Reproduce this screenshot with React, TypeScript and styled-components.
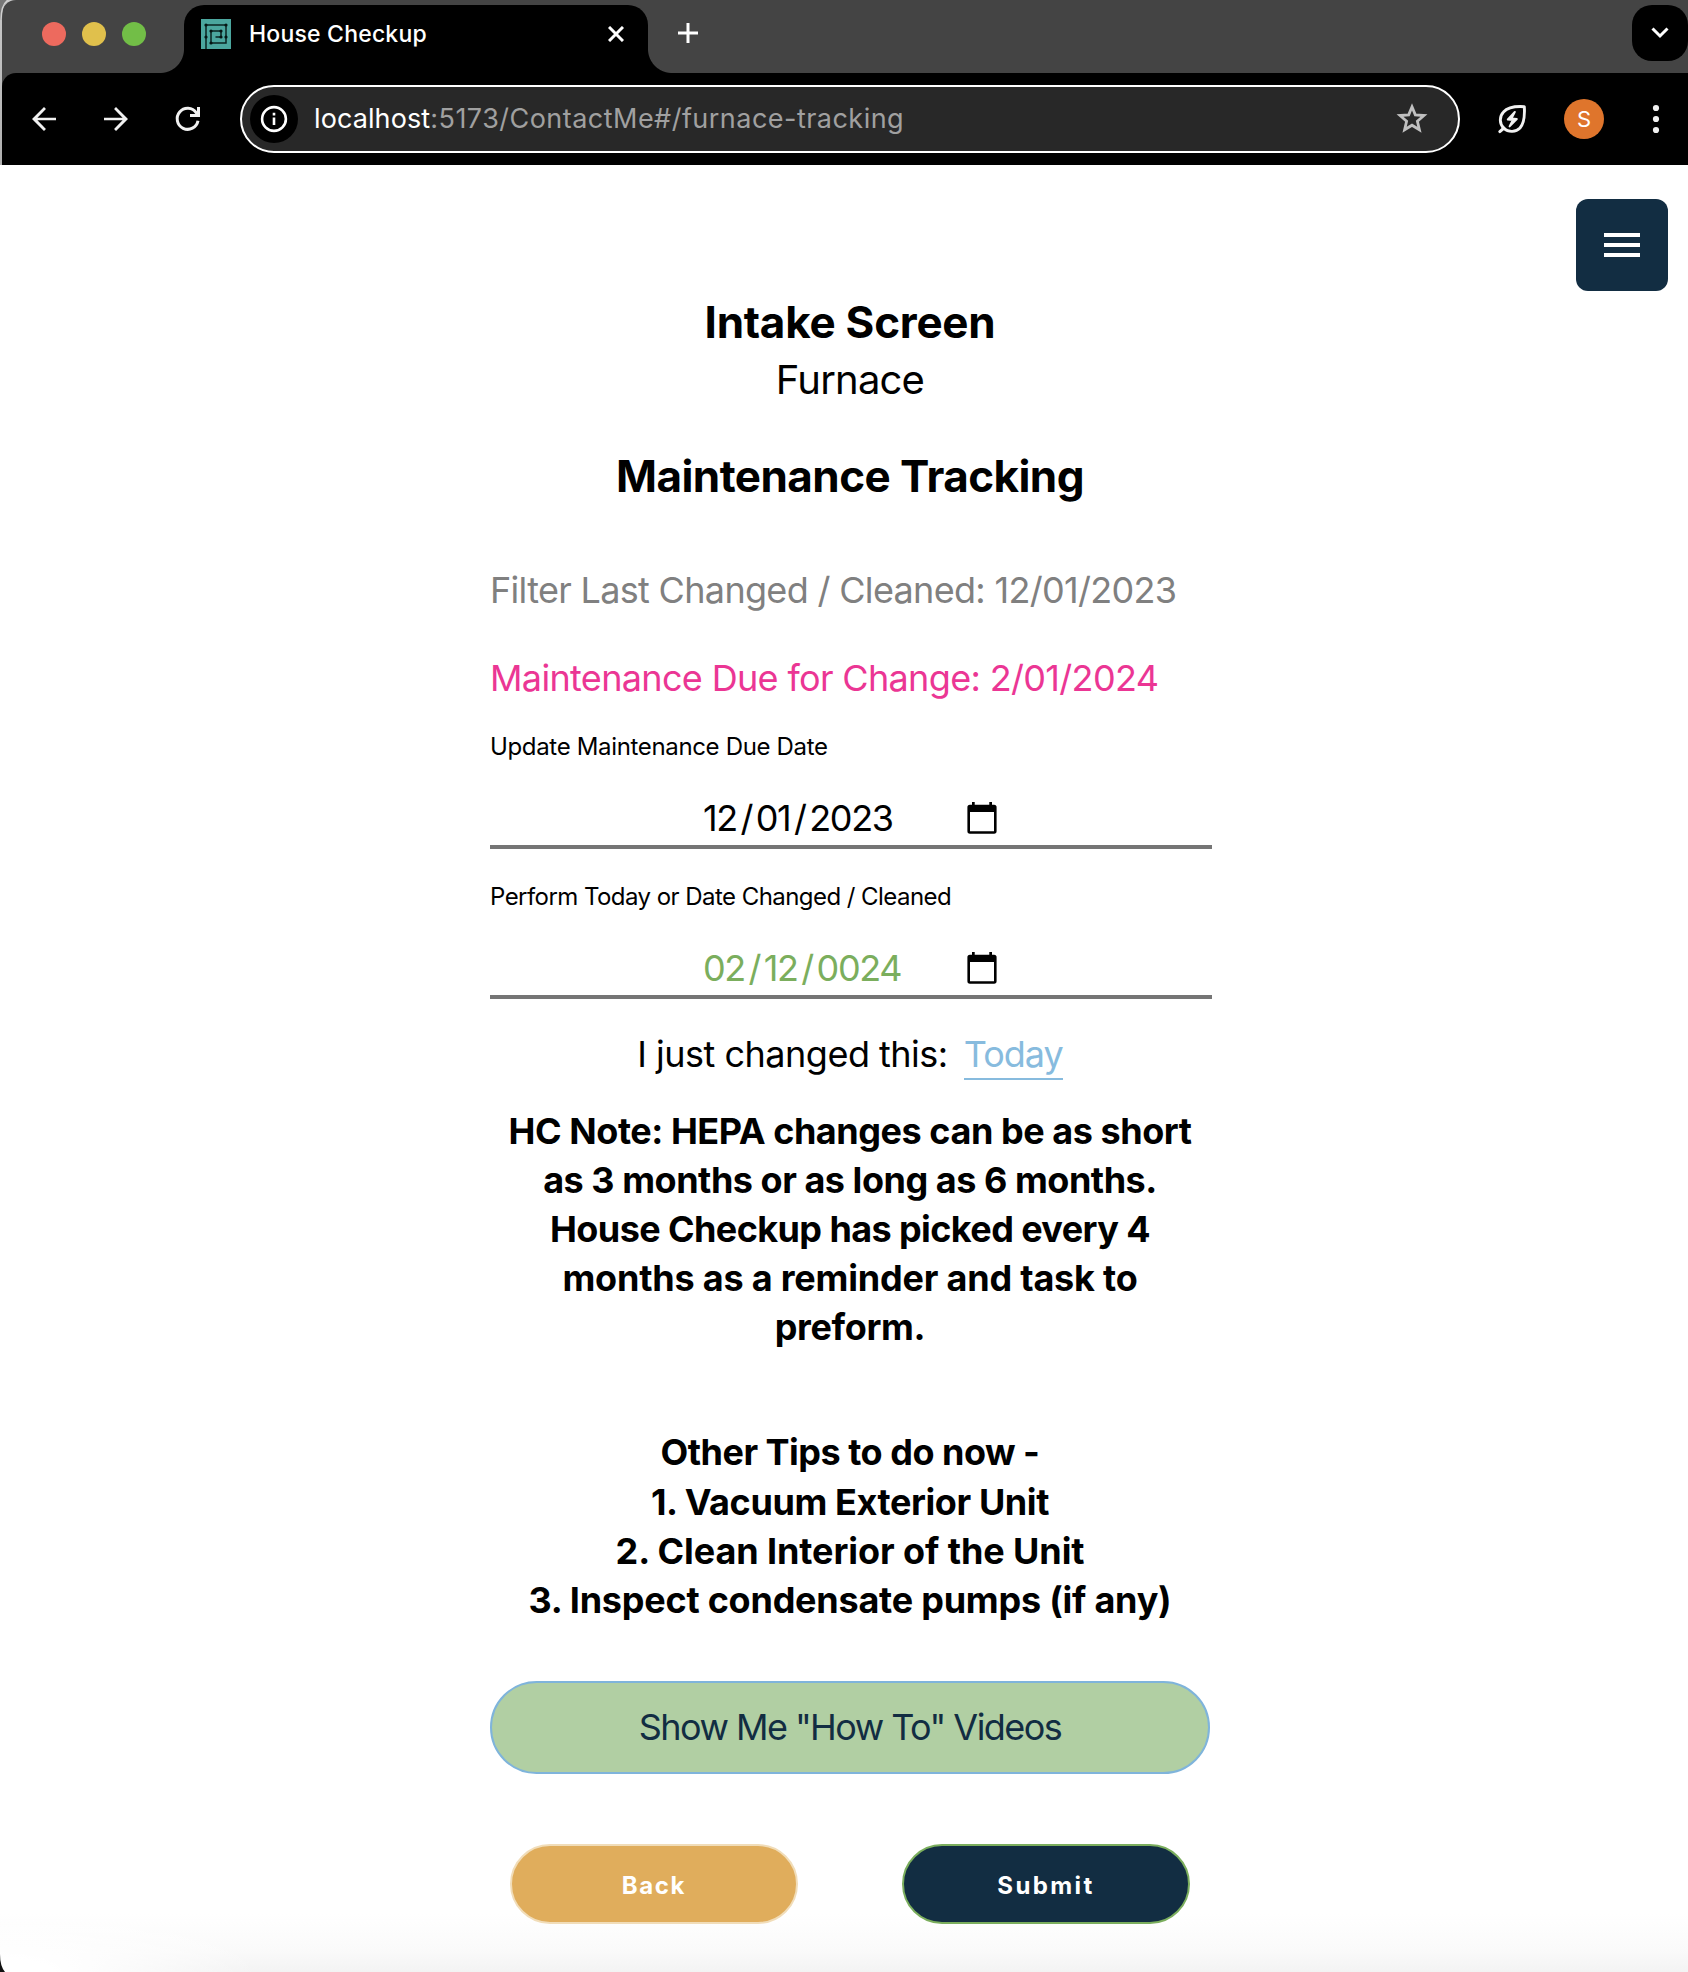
import React from "react";
import styled, { createGlobalStyle, css } from "styled-components";

const GlobalStyle = createGlobalStyle`
  *, *::before, *::after { box-sizing: border-box; }
  body { margin: 0; background: #fff; }
  button { font: inherit; border: 0; padding: 0; background: none; color: inherit; }
  svg { display: block; flex: none; }
`;

const Window = styled.div`
  position: relative;
  width: 1688px;
  height: 1972px;
  overflow: hidden;
  display: flex;
  flex-direction: column;
  font-family: Inter, "Noto Sans", "Liberation Sans", sans-serif;
  color: #000;
  background: #fff;
`;

/* ---------- browser chrome ---------- */

const Chrome = styled.header`
  flex: none;
  height: 165px;
  padding-left: 2px;
  background: linear-gradient(#c9c9c9, #b0b0b0);
`;

const TabStrip = styled.div`
  height: 73px;
  display: flex;
  background: #444;
  border-top-left-radius: 14px;
`;

const TrafficLights = styled.div`
  width: 182px;
  padding: 22px 0 0 40px;
  display: flex;
  gap: 16px;
`;

const Light = styled.span<{ $color: string }>`
  width: 24px;
  height: 24px;
  border-radius: 50%;
  background: ${(p) => p.$color};
`;

const flare = css`
  content: "";
  position: absolute;
  bottom: 0;
  width: 24px;
  height: 24px;
`;

const Tab = styled.div`
  position: relative;
  width: 464px;
  height: 68px;
  margin-top: 5px;
  padding: 0 24px 11px 17px;
  display: flex;
  align-items: center;
  background: #000;
  color: #fff;
  border-radius: 20px 20px 0 0;
  &::before {
    ${flare}
    left: -24px;
    background: radial-gradient(circle at 0 0, transparent 23.5px, #000 24.5px);
  }
  &::after {
    ${flare}
    right: -24px;
    background: radial-gradient(circle at 100% 0, transparent 23.5px, #000 24.5px);
  }
`;

const TabTitle = styled.span`
  flex: 1;
  margin-left: 18px;
  font-size: 23px;
  font-weight: 500;
  line-height: 30px;
  letter-spacing: 0.2px;
  white-space: nowrap;
`;

const NewTab = styled.button`
  width: 80px;
  height: 66px;
  display: grid;
  place-items: center;
`;

const TabSearch = styled.button`
  width: 56px;
  height: 56px;
  margin: 5px 0 0 auto;
  display: grid;
  place-items: center;
  border-radius: 20px;
  background: #000;
`;

const ToolbarFrame = styled.div`
  background: linear-gradient(#444 20px, transparent 20px);
`;

const Toolbar = styled.div`
  height: 92px;
  padding: 0 14px 0 24px;
  display: flex;
  align-items: center;
  background: #000;
  border-top-left-radius: 14px;
`;

const NavButton = styled.button`
  width: 36px;
  height: 36px;
  margin-right: 36px;
`;

const AddressBar = styled.div`
  width: 1220px;
  height: 68px;
  margin-left: -2px;
  padding: 0 30px 0 8px;
  display: flex;
  align-items: center;
  border: 2px solid #fff;
  border-radius: 34px;
  background: #282828;
`;

const SiteInfo = styled.span`
  width: 48px;
  height: 48px;
  display: grid;
  place-items: center;
  border-radius: 50%;
  background: #000;
`;

const Url = styled.span`
  flex: 1;
  margin-left: 16px;
  font-size: 27px;
  line-height: 36px;
  letter-spacing: 0.47px;
  color: #a0a0a0;
  white-space: nowrap;
  b { color: #fff; font-weight: 400; letter-spacing: 0.1px; }
`;

const ToolbarIcons = styled.div`
  flex: 1;
  padding-left: 36px;
  display: flex;
  align-items: center;
  justify-content: space-between;
`;

const Avatar = styled.span`
  width: 40px;
  height: 40px;
  margin-left: 2px;
  border-radius: 50%;
  background: #df752c;
  color: #fff;
  font-size: 22px;
  line-height: 40px;
  text-align: center;
`;

/* ---------- page ---------- */

const Page = styled.main`
  position: relative;
  flex: 1;
  padding: 34px 20px 0 0;
  background: radial-gradient(ellipse 260px 70px at 0 100%, #fff 20%, transparent 100%),
    linear-gradient(to top, #f3f3f3, #fafafa 22px, #fff 58px);
`;

const MenuButton = styled.button`
  width: 92px;
  height: 92px;
  margin-left: auto;
  display: flex;
  flex-direction: column;
  align-items: center;
  justify-content: center;
  gap: 6px;
  border-radius: 12px;
  background: #122d42;
`;

const MenuBar = styled.span`
  width: 36px;
  height: 4px;
  background: #fff;
`;

const Content = styled.section`
  width: 722px;
  margin-left: 490px;
  display: flex;
  flex-direction: column;
`;

const Line = styled.span<{ $ls?: number }>`
  display: block;
  white-space: nowrap;
  letter-spacing: ${(p) => p.$ls ?? 0}px;
`;

const centered = css`
  margin: 0;
  width: 720px;
  text-align: center;
`;

const Title = styled.h1`
  ${centered}
  font-size: 44px;
  line-height: 60px;
  font-weight: 700;
`;

const Subtitle = styled.p`
  ${centered}
  font-size: 40px;
  line-height: 56px;
`;

const Status = styled.p<{ $color: string }>`
  margin: 0;
  font-size: 36px;
  line-height: 48px;
  color: ${(p) => p.$color};
`;

const Label = styled.label`
  font-size: 24px;
  line-height: 32px;
`;

const DateField = styled.div<{ $color: string }>`
  height: 60px;
  display: flex;
  align-items: center;
  padding: 2px 215px 0 213px;
  border-bottom: 4px solid #757575;
  font-size: 36px;
  line-height: 48px;
  color: ${(p) => p.$color};
  svg { margin-left: auto; }
`;

const Slash = styled.span`
  margin: 0 3.7px 0 3.7px;
`;

const JustChanged = styled.p`
  ${centered}
  display: flex;
  justify-content: center;
  gap: 16px;
  font-size: 36px;
  line-height: 48px;
`;

const TodayLink = styled.a`
  height: 50px;
  color: #87bbde;
  border-bottom: 2px solid #87bbde;
`;

const Note = styled.p`
  ${centered}
  font-size: 36px;
  line-height: 49.1px;
  font-weight: 700;
`;

const VideosButton = styled.button`
  width: 720px;
  height: 93px;
  border: 2px solid #7fb4db;
  border-radius: 47px;
  background: #b1cfa3;
  color: #122d42;
  font-size: 36px;
`;

const Actions = styled.div`
  display: flex;
  justify-content: space-between;
  padding: 0 22px 0 20px;
`;

const ActionButton = styled.button<{ $bg: string; $edge: string }>`
  width: 288px;
  height: 80px;
  padding-top: 3px;
  border: 2px solid ${(p) => p.$edge};
  border-radius: 40px;
  background: ${(p) => p.$bg};
  color: #fff;
  font-size: 24px;
  font-weight: 700;
`;

const Space = styled.div<{ $h: number }>`
  flex: none;
  height: ${(p) => p.$h}px;
`;

const Corner = styled.svg`
  position: absolute;
  left: 0;
  bottom: 0;
`;

const TopCorner = styled.svg`
  position: absolute;
  left: 0;
  top: 0;
`;

/* ---------- icons ---------- */

const Favicon = () => (
  <svg width="30" height="30" viewBox="0 0 30 30">
    <rect width="30" height="30" fill="#4ba69e" />
    <g fill="none" stroke="#0b2422" strokeWidth="1.5">
      <path d="M5 30V6H25V24H10V12H20V18H14.5" />
    </g>
    <g fill="#051513">
      {[[5, 6], [25, 6], [5, 18], [25, 18], [10, 24], [10, 12], [20, 12], [20, 18]].map(([x, y]) => (
        <circle key={`${x}-${y}`} cx={x} cy={y} r="1.6" />
      ))}
    </g>
  </svg>
);

const Calendar = () => (
  <svg width="30" height="32" viewBox="0 0 30 32">
    <path
      fill="#000"
      fillRule="evenodd"
      d="M5 0h2.7v2.8h14.6V0H25v2.8h2a2.6 2.6 0 0 1 2.6 2.7v23.6A2.6 2.6 0 0 1 27 31.8H3a2.6 2.6 0 0 1-2.6-2.7V5.5A2.6 2.6 0 0 1 3 2.8h2zM3 10v19.2h24V10z"
    />
  </svg>
);

const Leaf = () => (
  <svg width="32" height="32" viewBox="0 0 32 32" fill="none" stroke="#f1f1f1">
    <path
      strokeWidth="2.9"
      strokeLinejoin="round"
      d="M28.3 3.7C29 14 27.5 21 24 25C20 29.2 12.5 29.6 8 25.5C3.2 21 3.2 13.5 7.5 9C11.5 4.6 18 3 28.3 3.7Z"
    />
    <path strokeWidth="3" strokeLinecap="round" d="M3.8 28.6L8 25" />
    <path strokeWidth="2" strokeLinejoin="round" fill="#f1f1f1" d="M18.8 9L11.8 16.4L16.8 17L13.6 23.4L20.8 16L15.6 15.4Z" />
  </svg>
);

const DateValue = ({ value }: { value: string }) => {
  const [month, day, year] = value.split("/");
  return (
    <Line $ls={-1.4}>
      {month}
      <Slash>/</Slash>
      {day}
      <Slash>/</Slash>
      {year}
    </Line>
  );
};

export default function App() {
  return (
    <Window>
      <GlobalStyle />
      <Chrome>
        <TabStrip>
          <TrafficLights>
            <Light $color="#ed6a5e" />
            <Light $color="#e0c04c" />
            <Light $color="#72be47" />
          </TrafficLights>
          <Tab>
            <Favicon />
            <TabTitle>House Checkup</TabTitle>
            <svg width="16" height="16" viewBox="0 0 16 16" stroke="#fff" strokeWidth="3">
              <path d="M1 1L15 15M15 1L1 15" />
            </svg>
          </Tab>
          <NewTab aria-label="New tab">
            <svg width="20" height="20" viewBox="0 0 20 20" stroke="#fff" strokeWidth="3">
              <path d="M10 0V20M0 10H20" />
            </svg>
          </NewTab>
          <TabSearch aria-label="Search tabs">
            <svg width="18" height="12" viewBox="0 0 18 12" fill="none" stroke="#fff" strokeWidth="3">
              <path d="M1.5 1.5L9 9L16.5 1.5" />
            </svg>
          </TabSearch>
        </TabStrip>
        <ToolbarFrame>
          <Toolbar>
            <NavButton aria-label="Back">
              <svg width="36" height="36" viewBox="0 0 24 24" fill="#f1f1f1">
                <path d="M20 11.1H7.6l5.7-5.7L12 4l-8 8 8 8 1.3-1.4-5.7-5.7H20z" />
              </svg>
            </NavButton>
            <NavButton aria-label="Forward">
              <svg width="36" height="36" viewBox="0 0 24 24" fill="#f1f1f1">
                <path d="M4 11.1H16.4l-5.7-5.7L12 4l8 8-8 8-1.3-1.4 5.7-5.7H4z" />
              </svg>
            </NavButton>
            <NavButton aria-label="Reload">
              <svg width="36" height="36" viewBox="0 0 36 36" fill="none" stroke="#f1f1f1" strokeWidth="3">
                <path d="M28 19.8A10.5 10.5 0 1 1 26.3 11.8L28 14" />
                <path d="M28.5 6V14.5H20" />
              </svg>
            </NavButton>
            <AddressBar>
              <SiteInfo>
                <svg width="28" height="28" viewBox="0 0 28 28" fill="none" stroke="#fff">
                  <circle cx="14" cy="14" r="11.9" strokeWidth="2.6" />
                  <path strokeWidth="2.6" d="M14 12.5V20M14 7.8V10.5" />
                </svg>
              </SiteInfo>
              <Url>
                <b>localhost</b>:5173/ContactMe#/furnace-tracking
              </Url>
              <svg width="32" height="32" viewBox="0 0 32 32" fill="none" stroke="#c0c0c0" strokeWidth="2.8">
                <path d="M16 3.8L19.3 11.8L28 12.5L21.4 18.2L23.4 26.7L16 22.2L8.6 26.7L10.6 18.2L4 12.5L12.7 11.8Z" />
              </svg>
            </AddressBar>
            <ToolbarIcons>
              <Leaf />
              <Avatar>S</Avatar>
              <svg width="36" height="36" viewBox="0 0 36 36" fill="#f1f1f1">
                <circle cx="18" cy="7" r="3.1" />
                <circle cx="18" cy="18" r="3.1" />
                <circle cx="18" cy="29" r="3.1" />
              </svg>
            </ToolbarIcons>
          </Toolbar>
        </ToolbarFrame>
      </Chrome>

      <Page>
        <MenuButton aria-label="Menu">
          <MenuBar />
          <MenuBar />
          <MenuBar />
        </MenuButton>
        <Content>
          <Space $h={1} />
          <Title><Line $ls={-0.25}>Intake Screen</Line></Title>
          <Subtitle><Line $ls={-0.8}>Furnace</Line></Subtitle>
          <Space $h={38} />
          <Title><Line $ls={-0.55}>Maintenance Tracking</Line></Title>
          <Space $h={60} />
          <Status $color="#808080"><Line $ls={-0.68}>Filter Last Changed / Cleaned: 12/01/2023</Line></Status>
          <Space $h={40} />
          <Status $color="#eb3694"><Line $ls={-0.66}>Maintenance Due for Change: 2/01/2024</Line></Status>
          <Space $h={29} />
          <Label><Line $ls={-0.34}>Update Maintenance Due Date</Line></Label>
          <Space $h={26} />
          <DateField $color="#000">
            <DateValue value="12/01/2023" />
            <Calendar />
          </DateField>
          <Space $h={32} />
          <Label><Line $ls={-0.55}>Perform Today or Date Changed / Cleaned</Line></Label>
          <Space $h={26} />
          <DateField $color="#7bae5d">
            <DateValue value="02/12/0024" />
            <Calendar />
          </DateField>
          <Space $h={31} />
          <JustChanged>
            <Line $ls={-0.5}>I just changed this:</Line>
            <TodayLink><Line $ls={-1}>Today</Line></TodayLink>
          </JustChanged>
          <Space $h={27} />
          <Note>
            <Line $ls={-0.45}>HC Note: HEPA changes can be as short</Line>
            <Line $ls={-0.47}>as 3 months or as long as 6 months.</Line>
            <Line $ls={-0.6}>House Checkup has picked every 4</Line>
            <Line $ls={-0.2}>months as a reminder and task to</Line>
            <Line $ls={-0.35}>preform.</Line>
          </Note>
          <Space $h={76} />
          <Note>
            <Line $ls={-0.5}>Other Tips to do now -</Line>
            <Line $ls={-0.4}>1. Vacuum Exterior Unit</Line>
            <Line $ls={-0.08}>2. Clean Interior of the Unit</Line>
            <Line $ls={-0.23}>3. Inspect condensate pumps (if any)</Line>
          </Note>
          <Space $h={56} />
          <VideosButton><Line $ls={-1.55}>Show Me "How To" Videos</Line></VideosButton>
          <Space $h={70} />
          <Actions>
            <ActionButton $bg="#e0ad5c" $edge="#f1ddb9"><Line $ls={1.6}>Back</Line></ActionButton>
            <ActionButton $bg="#122d42" $edge="#7bae5d"><Line $ls={2.4}>Submit</Line></ActionButton>
          </Actions>
        </Content>
      </Page>

      <TopCorner width="14" height="20" viewBox="0 0 14 20">
        <path d="M0 0H8Q2 5 2 20H0Z" fill="#777" />
        <path d="M1 20Q1 5 8 0" fill="none" stroke="#d0d0d0" strokeWidth="1.5" />
      </TopCorner>
      <Corner width="6" height="18" viewBox="0 0 6 18">
        <path d="M0 0Q0 12 5 18H0Z" fill="#111" />
      </Corner>
    </Window>
  );
}
